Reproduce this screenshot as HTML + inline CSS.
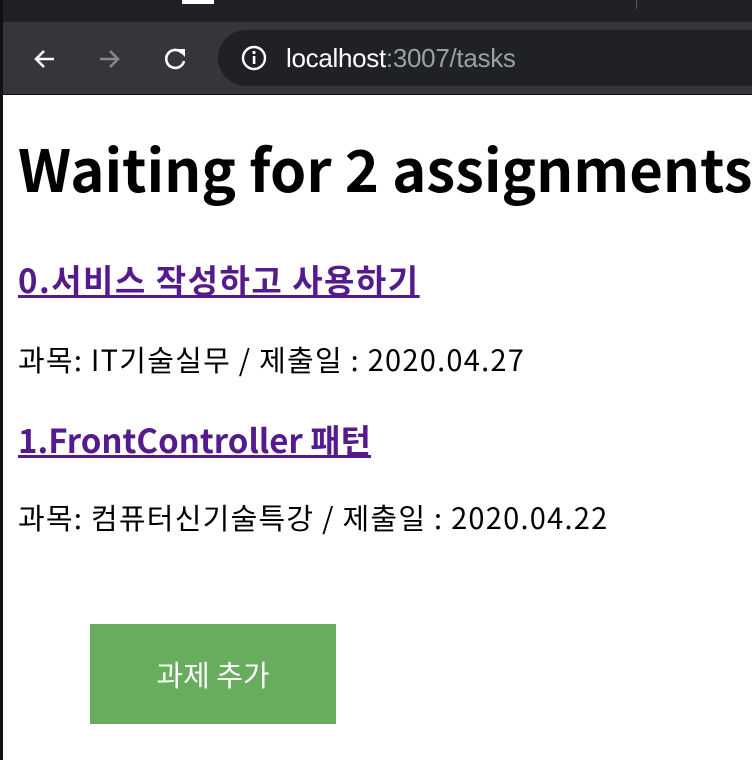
<!DOCTYPE html>
<html><head><meta charset="utf-8"><style>
*{margin:0;padding:0;box-sizing:border-box}
body{width:752px;height:760px;overflow:hidden;background:#fff;font-family:"Noto Sans CJK KR","Liberation Sans",sans-serif;position:relative}
.tabs{position:absolute;left:0;top:0;width:752px;height:22px;background:#202124}
.tab{position:absolute;left:182px;top:0;width:32px;height:4px;background:#fff}
.sep{position:absolute;left:636px;top:0;width:1px;height:9px;background:#555}
.bar{position:absolute;left:0;top:22px;width:752px;height:73px;background:#35363a;border-bottom:1px solid #111}
.url{position:absolute;left:218px;top:8px;width:560px;height:56px;border-radius:28px;background:#202124}
.urltext{position:absolute;left:68px;top:13px;font-family:"Liberation Sans",sans-serif;font-size:26px;color:#fff;letter-spacing:-0.3px}
.urltext span{color:#9aa0a6}
.lb{position:absolute;left:0;top:0;width:3px;height:760px;background:#111}
.c{position:absolute;left:18px;color:#000;line-height:1;white-space:nowrap}
h1{position:absolute;left:18px;top:138px;font-size:58px;font-weight:bold;white-space:nowrap;line-height:1}
a{color:#551a8b;font-size:33px;font-weight:bold;text-decoration:underline}
p{font-size:29px;letter-spacing:1.25px}
.btn{position:absolute;left:90px;top:624px;width:246px;height:100px;background:#68ad5e;color:#fff;font-size:29px;display:flex;align-items:center;justify-content:center}
</style></head><body>
<div class="tabs"><div class="tab"></div><div class="sep"></div></div>
<div class="bar">
<svg style="position:absolute;left:30px;top:22px" width="30" height="30" viewBox="0 0 30 30"><path d="M24 15H6M14 7l-8 8 8 8" stroke="#fff" stroke-width="2.6" fill="none"/></svg>
<svg style="position:absolute;left:94px;top:22px" width="30" height="30" viewBox="0 0 30 30"><path d="M6 15h18M16 7l8 8-8 8" stroke="#888" stroke-width="2.6" fill="none"/></svg>
<svg style="position:absolute;left:160px;top:22px" width="30" height="30" viewBox="0 0 30 30"><path d="M22 9A9 9 0 1 0 24 17" stroke="#fff" stroke-width="2.6" fill="none"/><path d="M17 5h8v8z" fill="#fff"/></svg>
<div class="url">
<svg style="position:absolute;left:22px;top:14px" width="28" height="28" viewBox="0 0 28 28"><circle cx="14" cy="14" r="11" stroke="#fff" stroke-width="2.4" fill="none"/><rect x="12.8" y="12" width="2.6" height="8" fill="#fff"/><circle cx="14" cy="8.5" r="1.6" fill="#fff"/></svg>
<div class="urltext">localhost<span>:3007/tasks</span></div>
</div>
</div>
<div class="lb"></div>
<h1>Waiting for 2 assignments</h1>
<div class="c" style="top:263px"><a style="letter-spacing:1.5px">0.서비스 작성하고 사용하기</a></div>
<div class="c" style="top:345px"><p>과목: IT기술실무 / 제출일 : 2020.04.27</p></div>
<div class="c" style="top:423px"><a>1.FrontController 패턴</a></div>
<div class="c" style="top:503px"><p>과목: 컴퓨터신기술특강 / 제출일 : 2020.04.22</p></div>
<div class="btn">과제 추가</div>
</body></html>
